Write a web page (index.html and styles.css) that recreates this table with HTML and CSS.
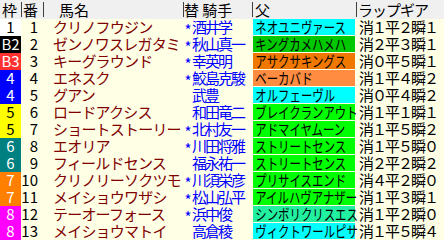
FILE: index.html
```html
<!DOCTYPE html>
<html lang="ja">
<head>
<meta charset="utf-8">
<link rel="stylesheet" href="styles.css">
</head>
<body>
<div class="table">
  <div class="row head">
    <div class="c waku">枠</div>
    <div class="c ban">番</div>
    <div class="c name">馬名</div>
    <div class="c jockey">替 騎手</div>
    <div class="c sire">父</div>
    <div class="c lap">ラップギア</div>
  </div>
  <div class="row">
    <div class="c waku w1">1</div><div class="c ban">1</div><div class="c name">クリノフウジン</div>
    <div class="c jockey"><span class="ast">*</span>酒井学</div>
    <div class="c sire"><span class="sb cyan"><span class="st">ネオユニヴァース</span></span></div>
    <div class="c lap">消１平２瞬１</div>
  </div>
  <div class="row">
    <div class="c waku w2">B2</div><div class="c ban">2</div><div class="c name">ゼンノワスレガタミ</div>
    <div class="c jockey"><span class="ast">*</span>秋山真一</div>
    <div class="c sire"><span class="sb green2"><span class="st">キングカメハメハ</span></span></div>
    <div class="c lap">消２平３瞬１</div>
  </div>
  <div class="row">
    <div class="c waku w3">B3</div><div class="c ban">3</div><div class="c name">キーグラウンド</div>
    <div class="c jockey"><span class="ast">*</span>幸英明</div>
    <div class="c sire"><span class="sb orange"><span class="st">アサクサキングス</span></span></div>
    <div class="c lap">消０平５瞬１</div>
  </div>
  <div class="row">
    <div class="c waku w4">4</div><div class="c ban">4</div><div class="c name">エネスク</div>
    <div class="c jockey"><span class="ast">*</span>鮫島克駿</div>
    <div class="c sire"><span class="sb salmon"><span class="st">ベーカバド</span></span></div>
    <div class="c lap">消１平４瞬２</div>
  </div>
  <div class="row">
    <div class="c waku w4">4</div><div class="c ban">5</div><div class="c name">グアン</div>
    <div class="c jockey"><span class="ast"></span>武豊</div>
    <div class="c sire"><span class="sb cyan"><span class="st">オルフェーヴル</span></span></div>
    <div class="c lap">消０平４瞬２</div>
  </div>
  <div class="row">
    <div class="c waku w5">5</div><div class="c ban">6</div><div class="c name">ロードアクシス</div>
    <div class="c jockey"><span class="ast"></span>和田竜二</div>
    <div class="c sire"><span class="sb green"><span class="st">ブレイクランアウト</span></span></div>
    <div class="c lap">消１平１瞬１</div>
  </div>
  <div class="row">
    <div class="c waku w5">5</div><div class="c ban">7</div><div class="c name">ショートストーリー</div>
    <div class="c jockey"><span class="ast">*</span>北村友一</div>
    <div class="c sire"><span class="sb green"><span class="st">アドマイヤムーン</span></span></div>
    <div class="c lap">消１平５瞬２</div>
  </div>
  <div class="row">
    <div class="c waku w6">6</div><div class="c ban">8</div><div class="c name">エオリア</div>
    <div class="c jockey"><span class="ast">*</span>川田将雅</div>
    <div class="c sire"><span class="sb green"><span class="st">ストリートセンス</span></span></div>
    <div class="c lap">消１平５瞬０</div>
  </div>
  <div class="row">
    <div class="c waku w6">6</div><div class="c ban">9</div><div class="c name">フィールドセンス</div>
    <div class="c jockey"><span class="ast"></span>福永祐一</div>
    <div class="c sire"><span class="sb green"><span class="st">ストリートセンス</span></span></div>
    <div class="c lap">消２平２瞬２</div>
  </div>
  <div class="row">
    <div class="c waku w7">7</div><div class="c ban">10</div><div class="c name">クリノリーソクツモ</div>
    <div class="c jockey"><span class="ast">*</span>川須栄彦</div>
    <div class="c sire"><span class="sb green"><span class="st">プリサイスエンド</span></span></div>
    <div class="c lap">消４平２瞬０</div>
  </div>
  <div class="row">
    <div class="c waku w7">7</div><div class="c ban">11</div><div class="c name">メイショウワザシ</div>
    <div class="c jockey"><span class="ast">*</span>松山弘平</div>
    <div class="c sire"><span class="sb green"><span class="st">アイルハヴアナザー</span></span></div>
    <div class="c lap">消１平３瞬１</div>
  </div>
  <div class="row">
    <div class="c waku w8">8</div><div class="c ban">12</div><div class="c name">テーオーフォース</div>
    <div class="c jockey"><span class="ast">*</span>浜中俊</div>
    <div class="c sire"><span class="sb aqua"><span class="st">シンボリクリスエス</span></span></div>
    <div class="c lap">消１平２瞬０</div>
  </div>
  <div class="row">
    <div class="c waku w8">8</div><div class="c ban">13</div><div class="c name">メイショウマトイ</div>
    <div class="c jockey"><span class="ast"></span>高倉稜</div>
    <div class="c sire"><span class="sb cyan"><span class="st">ヴィクトワールピサ</span></span></div>
    <div class="c lap">消１平５瞬４</div>
  </div>
</div>
</body>
</html>
```
FILE: styles.css
```css
html, body {
  margin: 0;
  padding: 0;
}
body {
  width: 444px;
  height: 240px;
  overflow: hidden;
  background: #ffffe6;
  font-family: "Noto Sans CJK JP", "Noto Sans", sans-serif;
  font-size: 15px;
  color: #000;
}
.table {
  display: flex;
  flex-direction: column;
}
.row {
  display: grid;
  grid-template-columns: 21px 22px 140px 69px 104px 88px;
  height: 16px;
  margin-bottom: 1px;
  line-height: 16px;
  white-space: nowrap;
}
.c {
  min-width: 0;
}
.head {
  height: 19px;
  margin-bottom: 0;
  line-height: 19px;
  background: #f0f0f0;
}
.head .c + .c {
  background: linear-gradient(#404040, #404040) left 2px / 1px 15px no-repeat;
}
.head .waku { padding-left: 2px; text-align: left; }
.head .ban { padding-left: 2px; padding-right: 0; text-align: left; }
.head .name { padding-left: 16px; color: #000; letter-spacing: 0; }
.head .jockey { padding-left: 1px; color: #000; letter-spacing: 0; }
.head .sire { padding-left: 3px; }
.head .lap { padding-left: 2px; letter-spacing: -1px; }

.waku {
  text-align: center;
}
.w1 { background: #ffffff; color: #000; }
.w2 { background: #000000; color: #fff; }
.w3 { background: #ff3030; color: #fff; }
.w4 { background: #0000ff; color: #fff; }
.w5 { background: #ffff00; color: #000; }
.w6 { background: #008080; color: #fff; }
.w7 { background: #ff8000; color: #fff; }
.w8 { background: #ff00ff; color: #fff; }

.ban {
  text-align: right;
  padding-right: 5px;
}
.name {
  padding-left: 10px;
  color: #800000;
  letter-spacing: -0.8px;
}
.jockey {
  padding-left: 1px;
  color: #0000ff;
  letter-spacing: -2px;
}
.ast {
  display: inline-block;
  width: 8px;
  text-align: center;
  vertical-align: -3px;
  letter-spacing: 0;
}
.sire {
  display: flex;
}
.sb {
  display: block;
  margin-left: 1px;
  width: 102px;
  height: 16px;
}
.st {
  display: inline-block;
  padding-left: 3px;
  transform: scaleX(0.76);
  transform-origin: left center;
}
.cyan { background: #00ffff; }
.green { background: #00ff00; }
.green2 { background: #00c800; }
.orange { background: #f07800; }
.salmon { background: #ff8c40; }
.aqua { background: #20f0a0; }
.lap {
  padding-left: 3px;
  letter-spacing: -2px;
}
```
